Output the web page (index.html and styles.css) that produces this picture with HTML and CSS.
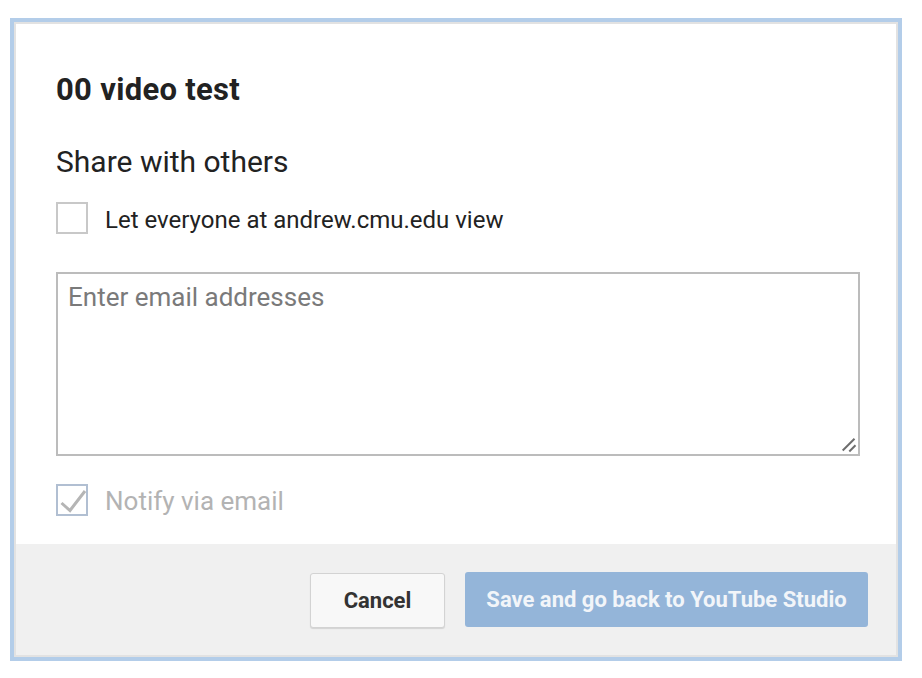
FILE: index.html
```html
<!DOCTYPE html>
<html>
<head>
<meta charset="utf-8">
<link rel="stylesheet" href="styles.css">
</head>
<body>
<div class="frame">
  <div class="dialog">
    <div class="content">
      <h1 class="title">00 video test</h1>
      <h2 class="subtitle">Share with others</h2>
      <label class="check-row">
        <span class="box"></span>
        <span class="check-label">Let everyone at andrew.cmu.edu view</span>
      </label>
      <div class="emails-wrap">
        <textarea class="emails" placeholder="Enter email addresses"></textarea>
        <svg class="grip" viewBox="0 0 16 16" width="16" height="16"><path d="M1.7 13.5 L13.5 1.7 M8.3 14.5 L14.5 8.3" fill="none" stroke="#6e6e6e" stroke-width="2"/></svg>
      </div>
      <label class="check-row disabled">
        <span class="box checked">
          <svg class="tick" viewBox="0 0 32 32" width="32" height="32"><path d="M5.5 19 L14 26.5 L29 7" fill="none" stroke="#b5b5b5" stroke-width="3"/></svg>
        </span>
        <span class="check-label">Notify via email</span>
      </label>
    </div>
    <div class="footer">
      <button class="btn cancel">Cancel</button>
      <button class="btn save">Save and go back to YouTube Studio</button>
    </div>
  </div>
</div>
</body>
</html>
```
FILE: styles.css
```css
html, body {
  margin: 0;
  padding: 0;
  background: #ffffff;
  font-family: Roboto, "Liberation Sans", sans-serif;
}
.frame {
  margin: 18px 0 0 10px;
  width: 892px;
  height: 643px;
  box-sizing: border-box;
  border: 4px solid #b3cde9;
}
.dialog {
  height: 100%;
  box-sizing: border-box;
  border: 2px solid #e2e2e2;
  display: flex;
  flex-direction: column;
  background: #fff;
}
.content {
  flex: 1;
  padding: 48px 36px 0 40px;
  display: flex;
  flex-direction: column;
  align-items: flex-start;
}
.title {
  margin: 0;
  font-size: 31px;
  line-height: 36px;
  font-weight: 700;
  letter-spacing: 0.3px;
  color: #222;
}
.subtitle {
  margin: 37px 0 0 0;
  font-size: 30px;
  line-height: 34px;
  font-weight: 400;
  color: #222;
}
.check-row {
  display: flex;
  align-items: flex-start;
  gap: 17px;
  margin-top: 23px;
}
.box {
  position: relative;
  width: 32px;
  height: 32px;
  box-sizing: border-box;
  border: 2px solid #c8c8c8;
  background: #fff;
}
.check-label {
  font-size: 24px;
  line-height: 32px;
  padding-top: 2px;
  color: #222;
}
.emails-wrap {
  position: relative;
  margin-top: 36px;
  width: 804px;
  height: 184px;
}
.emails {
  display: block;
  width: 100%;
  height: 100%;
  box-sizing: border-box;
  border: 2px solid #bcbcbc;
  padding: 8px 10px;
  font-family: Roboto, "Liberation Sans", sans-serif;
  font-size: 26px;
  line-height: 30px;
  color: #333;
  outline: none;
  resize: none;
  margin: 0;
}
.emails::placeholder {
  color: #7a7a7a;
}
.grip {
  position: absolute;
  right: 3px;
  bottom: 3px;
  pointer-events: none;
}
.disabled {
  margin-top: 28px;
}
.disabled .box {
  border-color: #b1bfd2;
}
.tick {
  position: absolute;
  left: -2px;
  top: -2px;
  filter: blur(0.5px);
}
.disabled .check-label {
  color: #b3b3b3;
  font-size: 26px;
  padding-top: 1px;
}
.footer {
  height: 111px;
  background: #f0f0f0;
  display: flex;
  justify-content: flex-end;
  align-items: flex-start;
  padding: 28px 28px 0 0;
  box-sizing: border-box;
  gap: 20px;
}
.btn {
  height: 55px;
  border-radius: 3px;
  font-family: Roboto, "Liberation Sans", sans-serif;
  font-weight: 700;
  font-size: 22px;
  cursor: pointer;
}
.cancel {
  width: 135px;
  margin-top: 1px;
  background: #f8f8f8;
  border: 1px solid #d3d3d3;
  box-shadow: 0 1px 1px rgba(0,0,0,0.12);
  color: #333;
}
.save {
  width: 403px;
  background: #94b5d9;
  border: none;
  color: #f2f5f9;
}
```
